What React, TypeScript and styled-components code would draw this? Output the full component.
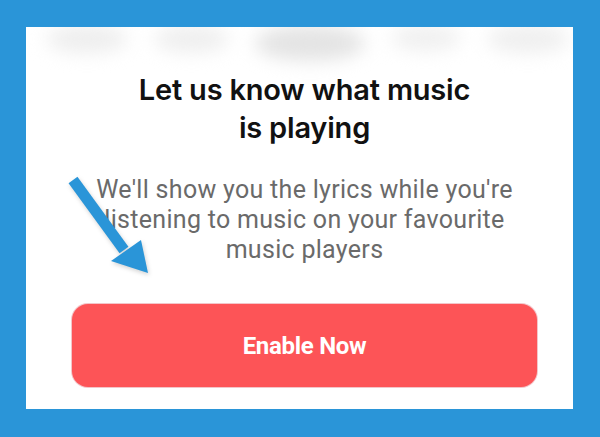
import React from "react";
import styled, { createGlobalStyle } from "styled-components";

const Global = createGlobalStyle`
  html, body { margin: 0; padding: 0; }
  body { width: 600px; height: 437px; overflow: hidden; }
`;

const Frame = styled.div`
  width: 600px;
  height: 437px;
  box-sizing: border-box;
  background: #2a95d8;
  padding: 27px 27px 28px 26px;
`;

const Panel = styled.div`
  position: relative;
  height: 100%;
  background: #ffffff;
  display: flex;
  flex-direction: column;
  overflow: hidden;
`;

const BlobRow = styled.div`
  height: 30px;
  display: flex;
  align-items: flex-start;
  gap: 26px;
  padding: 0 0 0 20px;
  filter: blur(9px);
`;

const Blob = styled.div<{ $w: number; $h: number; $shade: string }>`
  flex: none;
  width: ${(p) => p.$w}px;
  height: ${(p) => p.$h}px;
  margin-top: -2px;
  border-radius: 50%;
  background: ${(p) => p.$shade};
`;

const Content = styled.div`
  display: flex;
  flex-direction: column;
  align-items: center;
  padding: 0 36px 0 46px;
`;

const Title = styled.h1`
  margin: 14px 0 0 0;
  font-family: "Inter", "Noto Sans", sans-serif;
  font-weight: 560;
  font-size: 29px;
  line-height: 38px;
  letter-spacing: -0.2px;
  color: #111111;
  text-align: center;
`;

const Description = styled.p`
  margin: 28px 0 0 0;
  font-family: "Roboto", "Liberation Sans", sans-serif;
  font-weight: 400;
  font-size: 25px;
  line-height: 30px;
  letter-spacing: 0.3px;
  color: #6a6a6a;
  text-align: center;
  white-space: nowrap;
`;

const Button = styled.button`
  align-self: stretch;
  margin-top: 39px;
  height: 83px;
  border: none;
  border-radius: 16px;
  background: #fd5457;
  color: #ffffff;
  font-family: "Roboto", "Liberation Sans", sans-serif;
  font-weight: 700;
  font-size: 24px;
  letter-spacing: -0.3px;
  display: flex;
  align-items: center;
  justify-content: center;
  box-shadow: 0 0 0 1px rgba(220, 90, 100, 0.35);
  cursor: pointer;
`;

const Arrow = styled.svg`
  position: absolute;
  left: 36px;
  top: 143px;
  width: 100px;
  height: 115px;
  overflow: visible;
  filter: drop-shadow(1px 2px 2px rgba(0, 0, 0, 0.18));
`;

export default function App() {
  return (
    <>
      <Global />
      <Frame>
        <Panel>
          <BlobRow>
            <Blob $w={82} $h={28} $shade="#eeeeee" />
            <Blob $w={75} $h={28} $shade="#efefef" />
            <Blob $w={110} $h={36} $shade="#e4e4e4" />
            <Blob $w={70} $h={26} $shade="#f0f0f0" />
            <Blob $w={82} $h={28} $shade="#efefef" />
          </BlobRow>
          <Content>
            <Title>
              Let us know what music
              <br />
              is playing
            </Title>
            <Description>
              We'll show you the lyrics while you're
              <br />
              listening to music on your favourite
              <br />
              music players
            </Description>
            <Button>Enable Now</Button>
          </Content>
          <Arrow viewBox="36 143 100 115">
            <line x1="47" y1="153" x2="98" y2="223" stroke="#2a95d8" strokeWidth="11" />
            <polygon points="85,234 115,213 122,246" fill="#2a95d8" />
          </Arrow>
        </Panel>
      </Frame>
    </>
  );
}
